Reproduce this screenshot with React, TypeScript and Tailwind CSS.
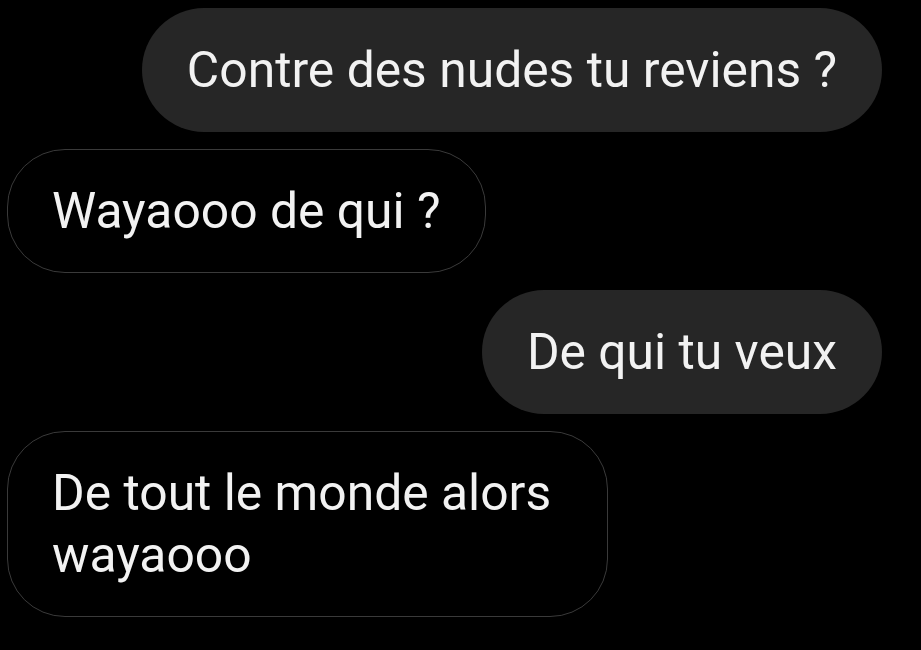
import React from "react";

const Sent = ({ children }: { children: React.ReactNode }) => (
  <div className="self-end mr-[39px] w-fit rounded-[62px] bg-[#262626] px-[45px] py-[31px] text-[49.8px] leading-[62px] text-[#f2f2f2]">
    {children}
  </div>
);

const Received = ({ children }: { children: React.ReactNode }) => (
  <div className="self-start ml-[7px] w-fit max-w-[601px] rounded-[58px] border-[1.5px] border-[#3a3a3a] bg-black px-[44px] py-[30px] text-[49.8px] leading-[62px] text-[#f2f2f2]">
    {children}
  </div>
);

export default function App() {
  return (
    <div
      className="flex h-[650px] w-[921px] flex-col gap-[17px] overflow-hidden bg-black pt-[8px]"
      style={{ fontFamily: "Roboto, 'Noto Sans', sans-serif" }}
    >
      <Sent>Contre des nudes tu reviens ?</Sent>
      <Received>Wayaooo de qui ?</Received>
      <Sent>De qui tu veux</Sent>
      <Received>De tout le monde alors wayaooo</Received>
    </div>
  );
}
